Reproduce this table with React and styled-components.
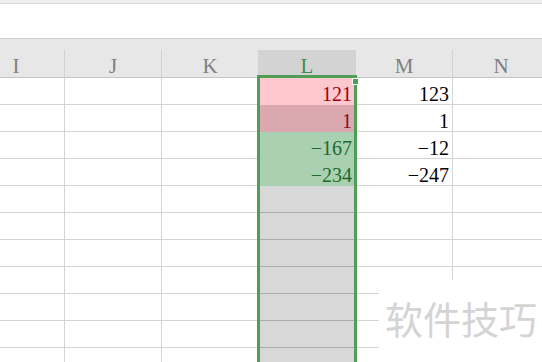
import React from 'react';
import styled, { createGlobalStyle } from 'styled-components';

const Global = createGlobalStyle`
  html, body { margin: 0; padding: 0; background: #ffffff; }
  body { overflow: hidden; }
`;

const Sheet = styled.div`
  position: relative;
  width: 542px;
  height: 362px;
  overflow: hidden;
  background: #ffffff;
`;

const TopStrip = styled.div`
  height: 3px;
  background: #efefef;
  border-bottom: 1px solid #d6d6d6;
`;

const FormulaArea = styled.div`
  height: 34px;
  background: #ffffff;
  border-bottom: 1px solid #d0d0d0;
`;

const HeaderBand = styled.div`
  height: 38px;
  background: #e7e7e7;
  border-bottom: 1px solid #c4c4c4;
  display: flex;
  align-items: flex-end;
  margin-left: -32px;
`;

const HeaderCell = styled.div`
  flex: 0 0 96px;
  width: 96px;
  height: 22px;
  padding-top: 5px;
  border-right: 1px solid #d2d2d2;
  background: ${p => (p.$active ? '#d3d3d3' : 'transparent')};
  color: ${p => (p.$active ? '#3f8f4a' : '#808080')};
  font-family: "Liberation Serif", "Times New Roman", serif;
  font-size: 21px;
  line-height: 22px;
  text-align: center;
`;

const Row = styled.div`
  display: flex;
  margin-left: -32px;
`;

const tones = {
  plain: { bg: '#ffffff', line: '#d4d4d4', fg: '#000000' },
  sel: { bg: '#d8d8d8', line: '#acacac', fg: '#000000' },
  pinkActive: { bg: '#ffc7ce', line: '#ffc7ce', fg: '#9c0006' },
  pinkSel: { bg: '#daa8ae', line: '#daa8ae', fg: '#8a0a18' },
  green: { bg: '#a9d0b1', line: '#a9d0b1', fg: '#1f6a2b' },
};

const Cell = styled.div`
  flex: 0 0 96px;
  width: 96px;
  height: 20px;
  padding: 6px 3px 0 0;
  box-sizing: content-box;
  margin-right: 0;
  border-right: 1px solid #d4d4d4;
  border-bottom: 1px solid ${p => tones[p.$tone].line};
  background: ${p => tones[p.$tone].bg};
  color: ${p => tones[p.$tone].fg};
  font-family: "Liberation Serif", "Times New Roman", serif;
  font-size: 20px;
  line-height: 20px;
  text-align: right;
  white-space: nowrap;
  width: 93px;
  flex-basis: 93px;
`;

const Selection = styled.div`
  position: absolute;
  left: 257px;
  top: 75px;
  width: 94px;
  bottom: -10px;
  border: 3px solid #4f9d57;
  pointer-events: none;
`;

const Handle = styled.div`
  position: absolute;
  right: -4px;
  top: 1px;
  width: 5px;
  height: 5px;
  background: #4f9d57;
  box-shadow: 0 0 0 1px #ffffff;
`;

const Watermark = styled.div`
  position: absolute;
  left: 379px;
  top: 280px;
  right: 0;
  bottom: 0;
  background: #ffffff;
  padding: 19px 0 0 6px;
  font-family: "Noto Sans CJK SC", "Noto Sans", sans-serif;
  font-size: 38px;
  line-height: 38px;
  color: #d4d4d4;
  white-space: nowrap;
`;

const columns = ['I', 'J', 'K', 'L', 'M', 'N'];

const data = [
  { l: '121', m: '123', tone: 'pinkActive' },
  { l: '1', m: '1', tone: 'pinkSel' },
  { l: '\u2212167', m: '\u221212', tone: 'green' },
  { l: '\u2212234', m: '\u2212247', tone: 'green' },
  ...Array.from({ length: 7 }, () => ({ l: '', m: '', tone: 'sel' })),
];

export default function App() {
  return (
    <>
      <Global />
      <Sheet>
        <TopStrip />
        <FormulaArea />
        <HeaderBand>
          {columns.map(c => (
            <HeaderCell key={c} $active={c === 'L'}>{c}</HeaderCell>
          ))}
        </HeaderBand>
        {data.map((r, i) => (
          <Row key={i}>
            <Cell $tone="plain" />
            <Cell $tone="plain" />
            <Cell $tone="plain" />
            <Cell $tone={r.tone}>{r.l}</Cell>
            <Cell $tone="plain">{r.m}</Cell>
            <Cell $tone="plain" />
          </Row>
        ))}
        <Selection>
          <Handle />
        </Selection>
        <Watermark>软件技巧</Watermark>
      </Sheet>
    </>
  );
}
